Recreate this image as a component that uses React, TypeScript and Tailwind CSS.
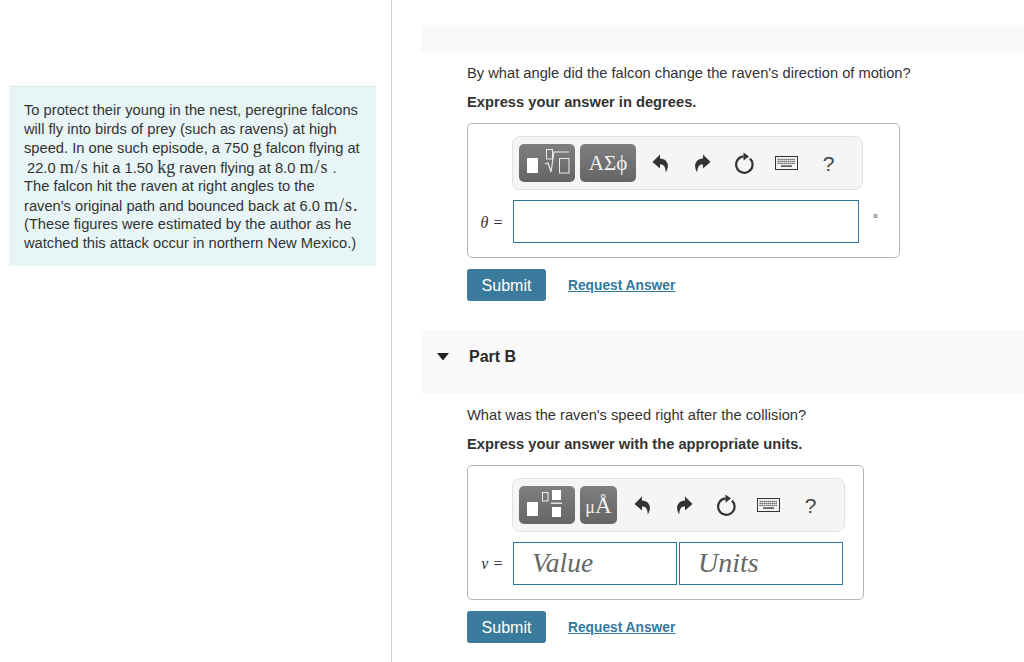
import React from "react";

const sans = "font-['Liberation_Sans',Arial,sans-serif]";
const serif = "font-['Liberation_Serif','Times_New_Roman',serif]";

function Undo({ flip = false }: { flip?: boolean }) {
  return (
    <svg width="17" height="19" viewBox="0 0 17 19" className={flip ? "-scale-x-100" : ""}>
      <path d="M8 .5 L.5 8 L8 14.5 V10.5 C11 10 13.5 11.5 13.8 18.5 C15.5 15.5 16.2 13 15.8 10.5 C15 6.5 12 4.5 8 4.4 Z" fill="#333" />
    </svg>
  );
}

function Reset() {
  return (
    <svg width="20" height="22" viewBox="0 0 20 22">
      <path d="M9.5 4.4 A8.2 8.2 0 1 0 16 6.6" fill="none" stroke="#333" strokeWidth="2.2" />
      <path d="M9.5 0.4 L15 4.4 L9.5 8.4 Z" fill="#333" />
    </svg>
  );
}

function Keyboard() {
  const keys: React.ReactNode[] = [];
  for (let r = 0; r < 3; r++) {
    for (let c = 0; c < 9; c++) {
      keys.push(<rect key={`${r}-${c}`} x={2.5 + c * 2} y={2.8 + r * 2} width="1.3" height="1.3" fill="#555" />);
    }
  }
  return (
    <svg width="23" height="14" viewBox="0 0 23 14">
      <rect x="0.5" y="0.5" width="22" height="13" fill="#f4f4f4" stroke="#333" />
      {keys}
      <rect x="6" y="9.3" width="11" height="1.6" fill="#555" />
    </svg>
  );
}

function Tools() {
  return (
    <div className="flex items-center">
      <div className="flex w-[42px] justify-center"><Undo /></div>
      <div className="flex w-[42px] justify-center"><Undo flip /></div>
      <div className="flex w-[42px] justify-center"><Reset /></div>
      <div className="flex w-[42px] justify-center"><Keyboard /></div>
      <div className={`flex w-[42px] justify-center pl-[1px] text-[21px] leading-none text-[#444] ${sans}`}>?</div>
    </div>
  );
}

function DarkBtn({ width, children }: { width: string; children: React.ReactNode }) {
  return (
    <div className={`flex h-[38px] ${width} items-center justify-center rounded-[5px] bg-gradient-to-b from-[#7f7f7f] to-[#656565]`}>
      {children}
    </div>
  );
}

function TemplateIcon() {
  return (
    <svg width="56" height="38" viewBox="0 0 56 38">
      <rect x="8" y="14" width="11" height="15" fill="#fff" />
      <rect x="27.5" y="5.5" width="6" height="9.5" fill="none" stroke="#e8e8e8" />
      <path d="M26 20 L29 19 L32 28 L35 8 L50 8" fill="none" stroke="#eee" strokeWidth="1.1" />
      <rect x="40.5" y="14.5" width="9.5" height="14.5" fill="none" stroke="#eee" />
    </svg>
  );
}

function FractionIcon() {
  return (
    <svg width="56" height="38" viewBox="0 0 56 38">
      <rect x="8" y="16" width="11" height="14" fill="#fff" />
      <rect x="23.5" y="6.5" width="5.5" height="8.5" fill="none" stroke="#eee" />
      <rect x="33" y="4" width="9" height="10" fill="#fff" />
      <rect x="32" y="16.5" width="11" height="1.4" fill="#eee" />
      <rect x="33" y="21" width="9" height="10" fill="#fff" />
    </svg>
  );
}

function SubmitRow() {
  return (
    <div className="flex items-center">
      <div className={`flex h-[32px] w-[79px] items-center justify-center rounded-[3px] bg-[#3a7a9c] pt-[1px] text-[16px] text-white ${sans}`}>Submit</div>
      <span className={`mt-[2px] ml-[22px] text-[13.75px] font-bold text-[#34789c] underline ${sans}`}>Request Answer</span>
    </div>
  );
}

const unit = `${serif} text-[18px] leading-none tracking-[1px]`;
const mass = `${serif} text-[18px] leading-none`;

export default function App() {
  return (
    <div className={`flex h-[662px] w-[1024px] overflow-hidden bg-white ${sans}`}>
      <div className="w-[392px] shrink-0 border-r border-[#cfcfcf] pt-[86px] pl-[9px]">
        <div className="h-[180px] w-[367px] border-t border-[#dfe6e6] bg-[#e8f5f6] pt-[14px] pl-[15px] text-[14.7px] leading-[18.5px] whitespace-nowrap text-[#333]">
          To protect their young in the nest, peregrine falcons<br />
          will fly into birds of prey (such as ravens) at high<br />
          speed. In one such episode, a 750 <span className={mass}>g</span> falcon flying at<br />
          <span className="ml-[3px]">22.0 <span className={unit}>m/s</span> hit a 1.50 <span className={mass}>kg</span> raven flying at 8.0 <span className={unit}>m/s</span> .</span><br />
          The falcon hit the raven at right angles to the<br />
          raven's original path and bounced back at 6.0 <span className={unit}>m/s.</span><br />
          (These figures were estimated by the author as he<br />
          watched this attack occur in northern New Mexico.)
        </div>
      </div>

      <div className="min-w-0 flex-1 pt-[25px] pl-[29px] text-[#333]">
        <div className="h-[28px] bg-[#f9f9f9]" />

        <div className="pt-[11px] pl-[46px]">
          <p className="text-[14.7px] leading-[18px]">By what angle did the falcon change the raven's direction of motion?</p>
          <p className="mt-[11px] text-[14.7px] leading-[18px] font-bold">Express your answer in degrees.</p>

          <div className="mt-[12px] h-[135px] w-[433px] rounded-[5px] border border-[#b5b5b5] pt-[12px]">
            <div className="ml-[44px] flex h-[54px] w-[351px] items-center rounded-[8px] border border-[#e2e2e2] bg-[#f5f5f5] pl-[6px]">
              <DarkBtn width="w-[56px]"><TemplateIcon /></DarkBtn>
              <div className="ml-[5px]">
                <DarkBtn width="w-[56px]"><span className={`text-[21px] leading-none text-[#f2f2f2] ${serif}`}>ΑΣϕ</span></DarkBtn>
              </div>
              <div className="ml-[3px]"><Tools /></div>
            </div>
            <div className="mt-[10px] flex items-center">
              <span className={`mt-[2px] w-[45px] pr-[10px] text-right text-[16px] tracking-[0.5px] whitespace-nowrap ${serif}`}><i>θ</i> =</span>
              <div className="h-[43px] w-[346px] border border-[#2f7598] bg-white" />
              <span className={`-mt-[8px] ml-[14px] text-[12px] ${serif}`}>°</span>
            </div>
          </div>

          <div className="mt-[11px]"><SubmitRow /></div>
        </div>

        <div className="mt-[29px] flex h-[64px] items-start bg-[#f9f9f9] pt-[18px]">
          <svg width="12" height="8" viewBox="0 0 12 8" className="mt-[5px] ml-[16px]"><path d="M0 0 H12 L6 7.5 Z" fill="#222" /></svg>
          <span className="ml-[20px] text-[16px] leading-[18px] font-bold text-[#2b2b2b]">Part B</span>
        </div>

        <div className="pt-[12px] pl-[46px]">
          <p className="text-[14.7px] leading-[18px]">What was the raven's speed right after the collision?</p>
          <p className="mt-[11px] text-[14.7px] leading-[18px] font-bold">Express your answer with the appropriate units.</p>

          <div className="mt-[12px] h-[135px] w-[397px] rounded-[5px] border border-[#b5b5b5] pt-[12px]">
            <div className="ml-[44px] flex h-[54px] w-[333px] items-center rounded-[8px] border border-[#e2e2e2] bg-[#f5f5f5] pl-[6px]">
              <DarkBtn width="w-[56px]"><FractionIcon /></DarkBtn>
              <div className="ml-[5px]">
                <DarkBtn width="w-[37px]">
                  <span className={`mt-[1px] text-[23px] leading-none whitespace-nowrap text-[#f2f2f2] ${serif}`}><span className="text-[18px]">μ</span>Å</span>
                </DarkBtn>
              </div>
              <div className="ml-[4px]"><Tools /></div>
            </div>
            <div className="mt-[10px] flex items-center">
              <span className={`w-[45px] pr-[10px] text-right text-[16px] tracking-[0.5px] whitespace-nowrap ${serif}`}><i>v</i> =</span>
              <div className={`flex h-[43px] w-[164px] items-center border border-[#2f7598] pb-[2px] pl-[18px] text-[27.5px] text-[#666] italic ${serif}`}>Value</div>
              <div className={`ml-[2px] flex h-[43px] w-[164px] items-center border border-[#2f7598] pb-[2px] pl-[18px] text-[28px] text-[#666] italic ${serif}`}>Units</div>
            </div>
          </div>

          <div className="mt-[11px]"><SubmitRow /></div>
        </div>
      </div>
    </div>
  );
}
